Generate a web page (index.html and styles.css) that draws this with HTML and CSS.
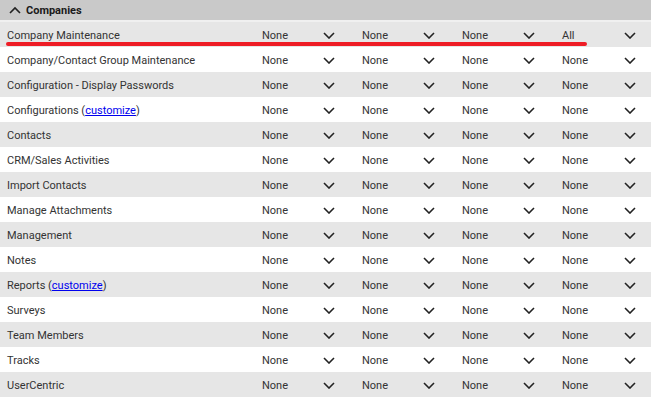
FILE: index.html
```html
<!DOCTYPE html>
<html lang="en">
<head>
    <meta charset="UTF-8">
    <title>Companies</title>
    <link rel="stylesheet" href="styles.css">
</head>
<body>
    <div class="section">
        <div class="section-head">
            <svg class="caret-up" width="12" height="8" viewBox="0 0 12 8"><path d="M1 7 L6 2 L11 7" fill="none" stroke="#222" stroke-width="1.6"/></svg>
            <span>Companies</span>
        </div>
        <div class="rows" id="rows"></div>
    </div>

    <script>
        const items = [
            ['Company Maintenance', ['None', 'None', 'None', 'All']],
            ['Company/Contact Group Maintenance'],
            ['Configuration - Display Passwords'],
            ['Configurations', null, true],
            ['Contacts'],
            ['CRM/Sales Activities'],
            ['Import Contacts'],
            ['Manage Attachments'],
            ['Management'],
            ['Notes'],
            ['Reports', null, true],
            ['Surveys'],
            ['Team Members'],
            ['Tracks'],
            ['UserCentric']
        ];

        const chevron = '<svg width="12" height="7" viewBox="0 0 12 7"><path d="M1 1 L6 6 L11 1" fill="none" stroke="#222" stroke-width="1.6"/></svg>';

        const rows = document.getElementById('rows');
        items.forEach((item, i) => {
            const row = document.createElement('div');
            row.className = 'row' + (i % 2 === 0 ? ' alt' : '');
            let label = item[0];
            if (item[2]) {
                label += ' (<a href="#">customize</a>)';
            }
            const values = item[1] || ['None', 'None', 'None', 'None'];
            let html = `<div class="label">${label}</div>`;
            values.forEach((v, j) => {
                html += `<div class="pick${j === 3 ? ' last' : ''}"><span>${v}</span>${chevron}</div>`;
            });
            if (i === 0) {
                html += '<div class="marker"></div>';
            }
            row.innerHTML = html;
            rows.appendChild(row);
        });
    </script>
</body>
</html>
```

FILE: styles.css
```css
body {
    margin: 0;
    font-family: 'Roboto', 'Liberation Sans', sans-serif;
    font-size: 11px;
    color: #333;
    background: #fff;
}

.section {
    width: 651px;
}

.section-head {
    height: 20px;
    background: #c9c9c9;
    border-bottom: 2px solid #f0f0f0;
    display: flex;
    align-items: center;
    padding-left: 9px;
    gap: 5px;
    font-weight: bold;
    color: #1a1a1a;
}

.row {
    position: relative;
    height: 25px;
    box-sizing: border-box;
    padding-top: 2px;
    display: grid;
    grid-template-columns: 255px 100px 100px 100px 96px;
    align-items: center;
    background: #fff;
}

.row.alt {
    background: #e6e6e6;
}

.label {
    padding-left: 7px;
    white-space: nowrap;
}

.label a {
    color: #0000ee;
}

.pick {
    display: flex;
    align-items: center;
    justify-content: space-between;
    padding-left: 7px;
    padding-right: 20px;
}

.pick.last {
    padding-right: 15px;
}

.pick svg {
    display: block;
}

/* hand drawn underline over the first row */
.marker {
    position: absolute;
    left: 6px;
    top: 20px;
    width: 581px;
    height: 4px;
    border-radius: 2px;
    background: #ee1c25;
}
```
